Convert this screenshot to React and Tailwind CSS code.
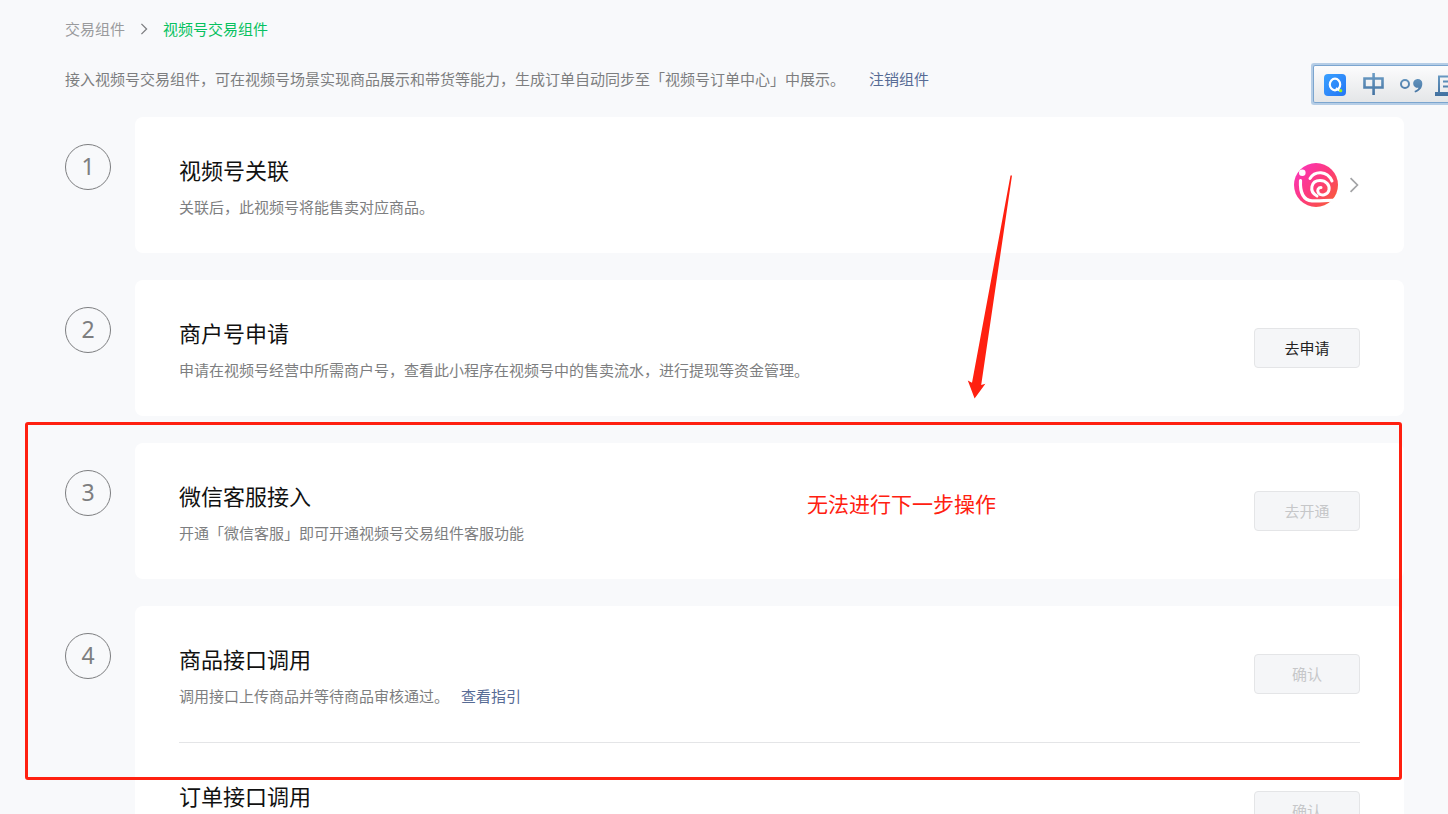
import React from "react";

const STEPS = [
  {
    items: [{ title: "视频号关联", desc: "关联后，此视频号将能售卖对应商品。", account: true }],
  },
  {
    items: [
      {
        title: "商户号申请",
        desc: "申请在视频号经营中所需商户号，查看此小程序在视频号中的售卖流水，进行提现等资金管理。",
        action: "去申请",
      },
    ],
  },
  {
    items: [
      {
        title: "微信客服接入",
        desc: "开通「微信客服」即可开通视频号交易组件客服功能",
        action: "去开通",
        disabled: true,
      },
    ],
  },
  {
    items: [
      {
        title: "商品接口调用",
        desc: "调用接口上传商品并等待商品审核通过。",
        link: "查看指引",
        action: "确认",
        disabled: true,
      },
      { title: "订单接口调用", action: "确认", disabled: true },
    ],
  },
];

function Chevron({ className }) {
  return (
    <svg viewBox="0 0 8 14" className={className} fill="none" stroke="currentColor" strokeWidth="1.5">
      <path d="M1 1l6 6-6 6" />
    </svg>
  );
}

function Avatar() {
  return (
    <svg viewBox="0 0 44 44" className="size-11" fill="none">
      <defs>
        <linearGradient id="avatar" x1="4" y1="6" x2="40" y2="38" gradientUnits="userSpaceOnUse">
          <stop stopColor="#fb35b4" />
          <stop offset="0.5" stopColor="#fd3a7c" />
          <stop offset="1" stopColor="#f85a3c" />
        </linearGradient>
      </defs>
      <circle cx="22" cy="22" r="22" fill="url(#avatar)" />
      <circle cx="8.3" cy="9.8" r="3.3" fill="#fff" />
      <g stroke="#fff" strokeLinecap="round">
        <path d="M6.5 17.5C6 27 8 37 18 37.800C26 38.3 33 37 40 37.3" strokeWidth="3.2" />
        <path d="M16 15.5C21 7.5 33 7.5 38 18" strokeWidth="3" />
        <path d="M23 33C14.500 28.500 17 17.5 26 17.5C32 17.5 36 22 35 27C34 32 27 33.500 24.5 30C22.500 27 24.500 24.500 27 24.500" strokeWidth="3" />
      </g>
    </svg>
  );
}

function StepItem({ item }) {
  return (
    <div className="flex min-h-[136px] items-center justify-between">
      <div className="self-start pt-[37px] pb-[35px]">
        <h2 className="text-[22px] leading-8 text-[#111]">{item.title}</h2>
        {item.desc && (
          <p className="mt-2.5 text-[15px] leading-[22px] text-[#7d7e80]">
            {item.desc}
            {item.link && (
              <a href="#guide" className="ml-3 text-[#576b95]">
                {item.link}
              </a>
            )}
          </p>
        )}
      </div>
      {item.account && (
        <button aria-label="查看关联账号" className="flex items-center gap-2.5">
          <Avatar />
          <Chevron className="h-4 w-3 text-[#a3a4a6]" />
        </button>
      )}
      {item.action && (
        <button
          disabled={item.disabled}
          className="h-10 w-[106px] shrink-0 rounded border border-[#e4e5e7] bg-[#f5f6f8] text-[15px] text-[#222] disabled:text-[#c6c7c9]"
        >
          {item.action}
        </button>
      )}
    </div>
  );
}

function InputMethodBar() {
  return (
    <div className="absolute top-[63px] right-0 w-[137px] rounded-l-[3px] border-2 border-r-0 border-[#b5cde6]">
      <div className="h-[38px] overflow-hidden rounded-l-xs border border-r-0 border-[#7ba5cf] bg-linear-to-b from-[#fcfcfd] to-[#e4e6e8]">
        <svg width="134" height="36" viewBox="0 0 134 36" fill="none">
          <defs>
            <linearGradient id="badge" x1="0" y1="0" x2="1" y2="1">
              <stop stopColor="#39a0ff" />
              <stop offset="1" stopColor="#2476f5" />
            </linearGradient>
            <linearGradient id="steel" x1="0" y1="6" x2="0" y2="32" gradientUnits="userSpaceOnUse">
              <stop stopColor="#6fa0c8" />
              <stop offset="1" stopColor="#3d6c9c" />
            </linearGradient>
          </defs>
          <rect x="10" y="8" width="22" height="22" rx="4" fill="url(#badge)" />
          <ellipse cx="21" cy="18.5" rx="5.2" ry="5.8" stroke="#fff" strokeWidth="2.2" />
          <path d="M22 22l4 3" stroke="#fff" strokeWidth="2" />
          <circle cx="26.7" cy="24.7" r="1.6" fill="#9cf01c" />
          <g stroke="url(#steel)">
            <path d="M50.5 12.5h18v9h-18zM59.6 7v22" strokeWidth="2.6" />
            <circle cx="91" cy="18" r="4" strokeWidth="2" />
            <path d="M125 27V10.5h12M129 15.5h8M129 20.5h8" strokeWidth="2" />
            <path d="M121 28h16" strokeWidth="4" />
          </g>
          <path
            d="M103.5 13a4.5 4.5 0 0 1 4.8 4.8c0 4.500-3 7.500-7.300 8.700l-.5-1.400c2.300-1 3.600-2.200 4-3.400a4.400 4.400 0 1 1-1-8.700z"
            fill="url(#steel)"
          />
        </svg>
      </div>
    </div>
  );
}

// Red pen marks laid over the page
function Annotations() {
  return (
    <div className="pointer-events-none">
      <svg viewBox="0 0 48 226" className="absolute top-[174px] left-[966px] h-[226px] w-12" fill="#ff2010">
        <path d="M44.5 1.5L46 1.5L15.2 211L19.4 209.8L8.6 224.5L1.8 206.5L6 208.8Z" />
      </svg>
      <p className="absolute top-[489px] left-[807px] text-[21px] leading-[30px] whitespace-nowrap text-[#ff2010]">
        无法进行下一步操作
      </p>
      <div className="absolute top-[422px] right-[46px] left-[25px] h-[358px] rounded-[3px] border-3 border-[#ff2010]" />
    </div>
  );
}

export default function App() {
  return (
    <div className="relative h-screen overflow-hidden bg-[#f8f9fb] font-['Noto_Sans','Noto_Sans_CJK_SC',sans-serif]">
      <main className="pt-[17px] pr-11 pl-[65px]">
        <nav className="flex items-center text-[15px] leading-6">
          <a href="#components" className="text-[#9a9b9d]">
            交易组件
          </a>
          <Chevron className="mx-3.5 h-3 w-2.5 text-[#7d7e80]" />
          <span className="text-[#07c160]">视频号交易组件</span>
        </nav>
        <p className="mt-[26px] text-[15px] leading-6 text-[#7d7e80]">
          接入视频号交易组件，可在视频号场景实现商品展示和带货等能力，生成订单自动同步至「视频号订单中心」中展示。
          <a href="#cancel" className="ml-6 text-[#576b95]">
            注销组件
          </a>
        </p>

        <ol className="mt-[26px] flex flex-col gap-[27px]">
          {STEPS.map((step, i) => (
            <li key={i} className="flex gap-6">
              <div className="mt-[27px] flex size-[46px] shrink-0 items-center justify-center rounded-full border border-[#7d7e80] pb-0.5 text-[23px] text-[#7d7e80]">
                {i + 1}
              </div>
              <div className="flex-1 divide-y divide-[#e4e5e7] rounded-lg bg-white px-11">
                {step.items.map((item) => (
                  <StepItem key={item.title} item={item} />
                ))}
              </div>
            </li>
          ))}
        </ol>
      </main>
      <InputMethodBar />
      <Annotations />
    </div>
  );
}
